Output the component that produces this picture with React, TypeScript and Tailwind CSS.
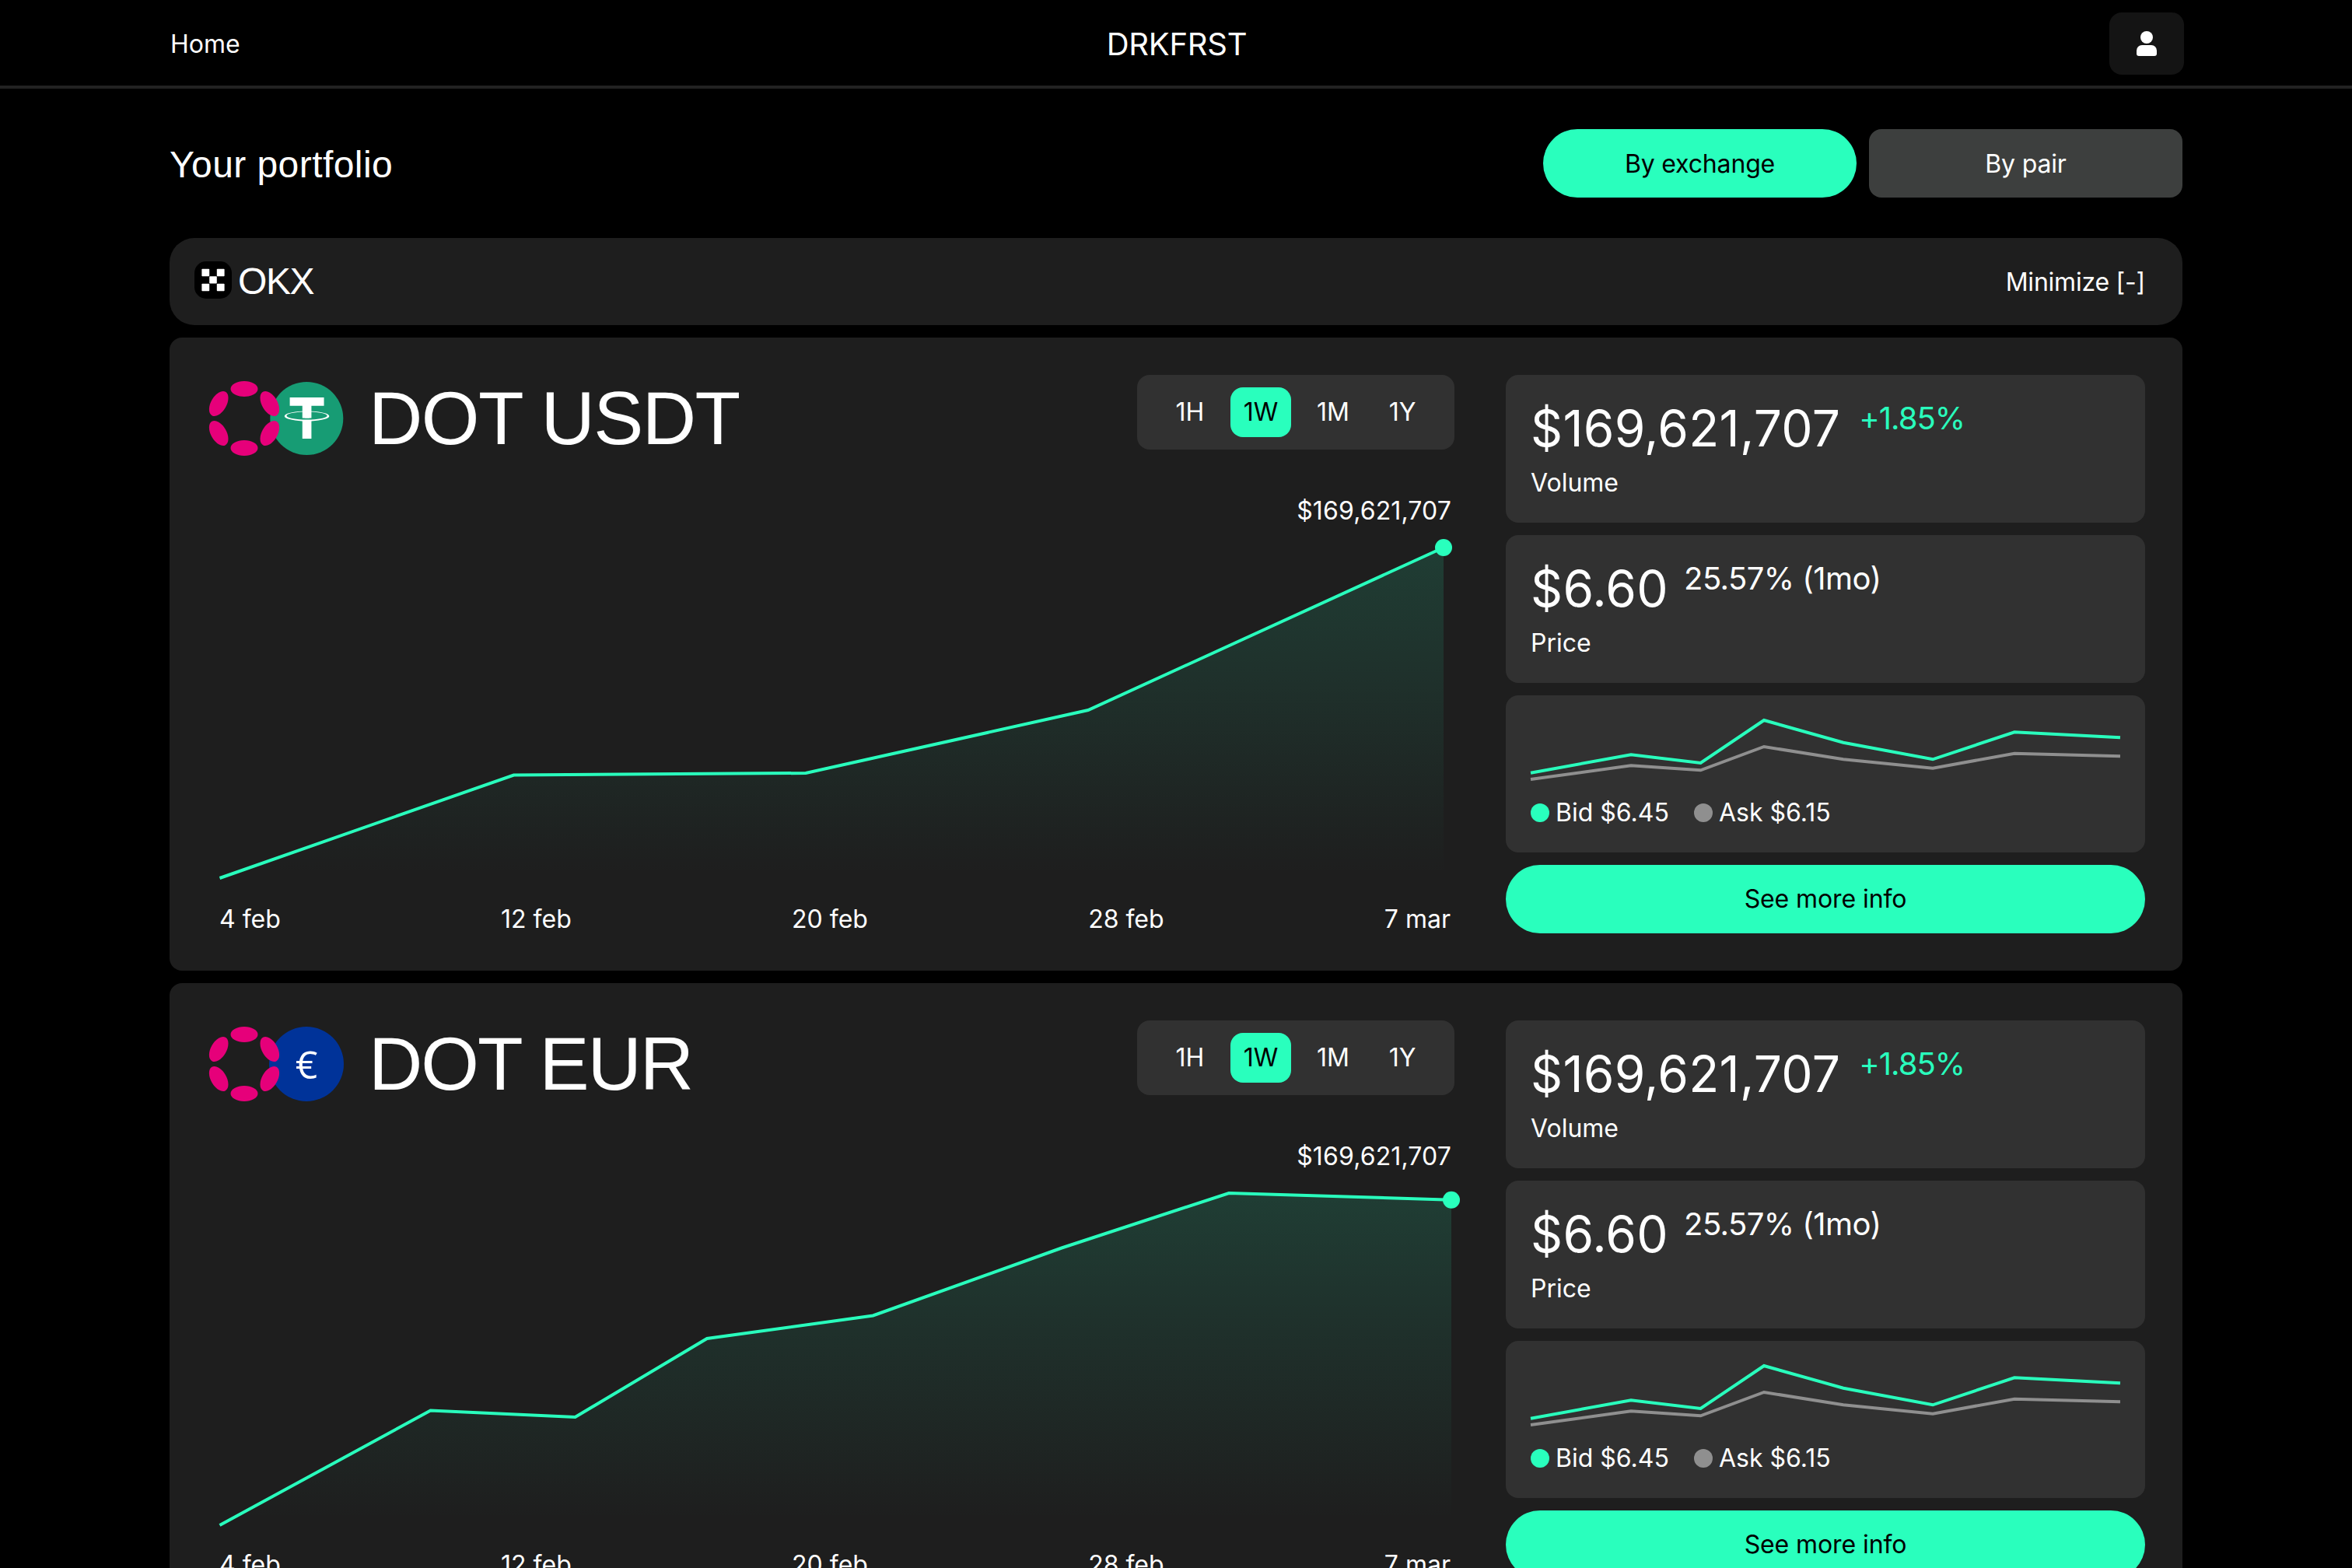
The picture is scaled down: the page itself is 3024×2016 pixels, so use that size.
import clsx from "clsx";

type Point = [number, number];

interface Pair {
  id: string;
  name: string;
  quote: "usdt" | "eur";
  points: Point[];
}

const RANGES = [
  { label: "1H", width: "w-[72px]" },
  { label: "1W", width: "w-[78px]" },
  { label: "1M", width: "w-[76px]" },
  { label: "1Y", width: "w-[70px]" },
];
const DATES = ["4 feb", "12 feb", "20 feb", "28 feb", "7 mar"];

const PAIRS: Pair[] = [
  {
    id: "dot-usdt",
    name: "DOT USDT",
    quote: "usdt",
    points: [
      [0.5, 452],
      [378.5, 319.5],
      [754, 317],
      [1117, 236],
      [1574, 27],
    ],
  },
  {
    id: "dot-eur",
    name: "DOT EUR",
    quote: "eur",
    points: [
      [0.5, 454],
      [271.5, 306.5],
      [457.5, 315],
      [627, 214],
      [840.5, 184.5],
      [1083, 97.5],
      [1298, 27],
      [1584, 35.7],
    ],
  },
];

const BID: Point[] = [
  [0, 67.7],
  [129, 44.3],
  [218.5, 55],
  [300, 0],
  [402, 28.7],
  [517, 50.3],
  [622, 15.3],
  [758, 22.3],
];

const ASK: Point[] = [
  [0, 76],
  [129, 58.3],
  [218.5, 64.3],
  [300, 34],
  [402, 50.3],
  [517, 61.7],
  [622, 42.7],
  [758, 46.3],
];

const toPoints = (points: Point[]) => points.map((p) => p.join(",")).join(" ");

const UserIcon = () => (
  <svg width="26" height="32" viewBox="0 0 26 32" fill="white">
    <circle cx="13" cy="8" r="8" />
    <path d="M7 18h12a7 7 0 0 1 7 7v4a3 3 0 0 1-3 3H3a3 3 0 0 1-3-3v-4a7 7 0 0 1 7-7Z" />
  </svg>
);

const OkxLogo = () => (
  <svg width="48" height="48" viewBox="0 0 48 48" className="-mt-1">
    <rect width="48" height="48" rx="15" fill="black" />
    <g fill="white">
      <rect x="9.4" y="9.8" width="9.8" height="9.4" rx="0.8" />
      <rect x="28.8" y="9.8" width="9.8" height="9.4" rx="0.8" />
      <rect x="19.2" y="19.2" width="9.6" height="9.4" rx="0.8" />
      <rect x="9.4" y="28.8" width="9.8" height="9.4" rx="0.8" />
      <rect x="28.8" y="28.8" width="9.8" height="9.4" rx="0.8" />
    </g>
  </svg>
);

const PolkadotLogo = () => (
  <svg width="96" height="96" viewBox="0 0 96 96" fill="#E6007A" className="relative z-10">
    <ellipse cx="48" cy="10" rx="17.5" ry="10" />
    <ellipse cx="48" cy="86" rx="17.5" ry="10" />
    <ellipse cx="15.2" cy="29" rx="17.5" ry="10" transform="rotate(-60 15.2 29)" />
    <ellipse cx="80.8" cy="29" rx="17.5" ry="10" transform="rotate(60 80.8 29)" />
    <ellipse cx="15.2" cy="67" rx="17.5" ry="10" transform="rotate(60 15.2 67)" />
    <ellipse cx="80.8" cy="67" rx="17.5" ry="10" transform="rotate(-60 80.8 67)" />
  </svg>
);

const TetherLogo = () => (
  <svg width="96" height="96" viewBox="0 0 96 96" className="-ml-4">
    <circle cx="48.3" cy="48" r="47" fill="#179C74" />
    <path
      transform="translate(1 -2.3) scale(2.98)"
      fill="white"
      d="M17.922 17.383v-.002c-.11.008-.677.042-1.942.042-1.01 0-1.721-.03-1.971-.042v.003c-3.888-.171-6.79-.848-6.79-1.658 0-.809 2.902-1.486 6.79-1.66v2.644c.254.018.982.061 1.988.061 1.207 0 1.812-.05 1.925-.06v-2.643c3.88.173 6.775.85 6.775 1.658 0 .81-2.895 1.485-6.775 1.657m0-3.59v-2.366h5.414V7.819H8.595v3.608h5.414v2.365c-4.4.202-7.709 1.074-7.709 2.118 0 1.044 3.309 1.915 7.709 2.118v7.582h3.913v-7.584c4.393-.202 7.694-1.073 7.694-2.116 0-1.043-3.301-1.914-7.694-2.117"
    />
  </svg>
);

const EuroLogo = () => (
  <div className="-ml-4 flex size-24 items-center justify-center rounded-full bg-[#003399] font-['Open_Sans',sans-serif] text-[50px] font-medium leading-none">
    €
  </div>
);

const RangeTabs = () => (
  <div className="flex h-24 items-center gap-4 rounded-2xl bg-[#313131] px-8">
    {RANGES.map(({ label, width }) => (
      <button
        key={label}
        className={clsx(
          "h-16 rounded-2xl text-center",
          width,
          label === "1W" ? "bg-[#29FFBD] text-black" : "text-white"
        )}
      >
        {label}
      </button>
    ))}
  </div>
);

const AreaChart = ({ id, points }: { id: string; points: Point[] }) => {
  const [lastX, lastY] = points[points.length - 1];
  const area = `${toPoints(points)} ${lastX},454 1,454`;

  return (
    <svg width="1584" height="486" viewBox="0 0 1584 486" className="overflow-visible">
      <defs>
        <linearGradient id={id} gradientUnits="userSpaceOnUse" x1="0" y1="27" x2="0" y2="448">
          <stop offset="0" stopColor="#29FFBD" stopOpacity="0.14" />
          <stop offset="1" stopColor="#29FFBD" stopOpacity="0" />
        </linearGradient>
      </defs>
      <polygon points={area} fill={`url(#${id})`} />
      <polyline points={toPoints(points)} fill="none" stroke="#29FFBD" strokeWidth="4" />
      <circle cx={lastX} cy={lastY} r="11" fill="#29FFBD" />
    </svg>
  );
};

interface StatProps {
  value: string;
  note: string;
  label: string;
  positive?: boolean;
}

const Stat = ({ value, note, label, positive }: StatProps) => (
  <div className="flex h-[190px] flex-col justify-between rounded-2xl bg-[#313131] p-8">
    <div className={clsx("flex items-start", positive ? "gap-6" : "gap-5")}>
      <span className="text-[64px] leading-[74px] tracking-[0.005em]">{value}</span>
      <span
        className={clsx(
          "text-[40px] leading-[47px]",
          positive ? "tracking-[-0.025em] text-[#29FFBD]" : "tracking-[-0.014em]"
        )}
      >
        {note}
      </span>
    </div>
    <span className="leading-[39px]">{label}</span>
  </div>
);

const BidAsk = () => (
  <div className="flex h-[202px] flex-col justify-between rounded-2xl bg-[#313131] p-8">
    <svg width="758" height="80" viewBox="0 0 758 80" fill="none" strokeWidth="4" className="overflow-visible">
      <polyline points={toPoints(ASK)} stroke="#8F8F8F" />
      <polyline points={toPoints(BID)} stroke="#29FFBD" />
    </svg>
    <div className="flex gap-8 leading-[39px]">
      <div className="flex items-center gap-2">
        <span className="size-6 rounded-full bg-[#29FFBD]" />
        Bid $6.45
      </div>
      <div className="flex items-center gap-2">
        <span className="size-6 rounded-full bg-[#8F8F8F]" />
        Ask $6.15
      </div>
    </div>
  </div>
);

const PairCard = ({ pair }: { pair: Pair }) => (
  <section className="flex h-[814px] shrink-0 justify-between rounded-2xl bg-[#1E1E1E] p-12">
    <div className="flex w-[1604px] flex-col">
      <div className="flex h-28 items-start justify-between">
        <div className="flex h-28 items-center">
          <PolkadotLogo />
          {pair.quote === "usdt" ? <TetherLogo /> : <EuroLogo />}
          <h2
            className={clsx(
              "ml-8 font-['Liberation_Sans',sans-serif] text-8xl leading-none",
              pair.quote === "usdt" ? "tracking-[-0.016em]" : "tracking-[-0.021em]"
            )}
          >
            {pair.name}
          </h2>
        </div>
        <RangeTabs />
      </div>
      <div className="ml-4 mt-[43px] w-[1584px]">
        <p className="text-right leading-10 tracking-[0.004em]">$169,621,707</p>
        <AreaChart id={pair.id} points={pair.points} />
        <div className="flex w-[1583px] justify-between leading-[38px]">
          {DATES.map((date) => (
            <span key={date}>{date}</span>
          ))}
        </div>
      </div>
    </div>
    <div className="flex w-[822px] flex-col gap-4">
      <Stat value="$169,621,707" note="+1.85%" label="Volume" positive />
      <Stat value="$6.60" note="25.57% (1mo)" label="Price" />
      <BidAsk />
      <button className="h-22 rounded-full bg-[#29FFBD] text-black tracking-[-0.003em]">See more info</button>
    </div>
  </section>
);

export default function App() {
  return (
    <div className="h-[2016px] w-[3024px] overflow-hidden bg-black font-[Inter,sans-serif] text-[32px] leading-10 text-white">
      <header className="h-[114px] border-b-4 border-[#222222] px-54 pt-4">
        <div className="grid h-20 grid-cols-3 items-center">
          <a className="pl-[3px] pt-0.5">Home</a>
          <span className="pl-0.5 pt-0.5 text-center text-[40px] tracking-[-0.006em]">DRKFRST</span>
          <button className="flex h-20 w-24 items-center justify-center justify-self-end rounded-2xl bg-[#141414]">
            <UserIcon />
          </button>
        </div>
      </header>
      <main className="mx-auto flex w-[2588px] flex-col gap-4 pt-13">
        <div className="mb-9 flex items-center justify-between">
          <h1 className="pt-1 font-['Liberation_Sans',sans-serif] text-5xl tracking-[0.009em]">
            Your portfolio
          </h1>
          <div className="flex gap-4 tracking-[-0.005em]">
            <button className="h-22 w-[403px] rounded-full bg-[#29FFBD] pt-0.5 text-black">By exchange</button>
            <button className="h-22 w-[403px] rounded-2xl bg-[#3D3F3E] pt-0.5">By pair</button>
          </div>
        </div>
        <div className="flex h-28 items-center justify-between rounded-[32px] bg-[#1E1E1E] pl-8 pr-12">
          <div className="flex items-center gap-2">
            <OkxLogo />
            <h2 className="font-['Liberation_Sans',sans-serif] text-5xl tracking-[-0.03em]">OKX</h2>
          </div>
          <button className="pt-0.5 tracking-[-0.007em]">Minimize [-]</button>
        </div>
        {PAIRS.map((pair) => (
          <PairCard key={pair.id} pair={pair} />
        ))}
      </main>
    </div>
  );
}
